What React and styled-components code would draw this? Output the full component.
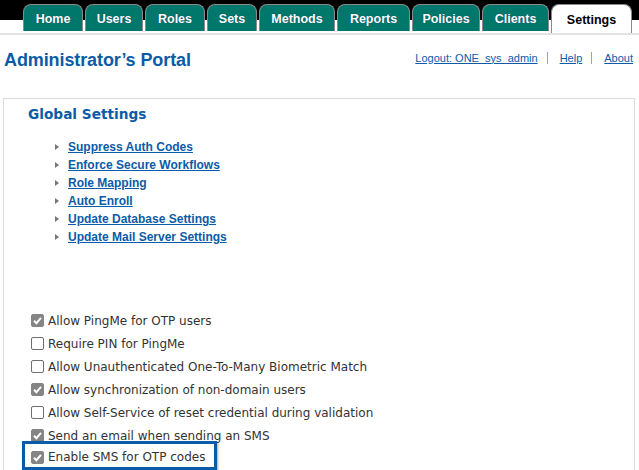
import React from "react";
import styled, { createGlobalStyle } from "styled-components";

const GlobalStyle = createGlobalStyle`
  body {
    margin: 0;
    background: #fff;
    font-family: "Liberation Sans", Arial, sans-serif;
  }
`;

const Page = styled.div`
  width: 639px;
  height: 470px;
  overflow: hidden;
`;

const TabBar = styled.div`
  display: flex;
  gap: 2px;
  height: 29px;
  padding: 4px 0 0 23px;
  background: linear-gradient(#000 0 20px, #fff 20px);
  border-bottom: 2px solid #e2e2e2;
`;

const Tab = styled.div`
  box-sizing: border-box;
  width: ${(p) => p.$w}px;
  height: ${(p) => (p.$active ? 29 : 27)}px;
  margin-bottom: ${(p) => (p.$active ? -2 : 0)}px;
  display: flex;
  align-items: center;
  justify-content: center;
  padding-top: 1px;
  border: 1px solid #8a8a8a;
  border-bottom: none;
  border-radius: 8px 8px 0 0;
  background: ${(p) => (p.$active ? "#fff" : "#00776b")};
  color: ${(p) => (p.$active ? "#000" : "#fff")};
  font-size: 12.5px;
  font-weight: bold;
  text-shadow: ${(p) => (p.$active ? "none" : "0 0 1px #003a60")};
  position: relative;
`;

const TitleRow = styled.div`
  display: flex;
  justify-content: space-between;
  align-items: center;
  padding: 14px 6px 0 4px;
  height: 22px;
`;

const Title = styled.h1`
  margin: 0;
  font-size: 18px;
  font-weight: bold;
  color: #0a5ca6;
  letter-spacing: -0.1px;
`;

const TopLinks = styled.div`
  display: flex;
  align-items: center;
  font-size: 11px;
  margin-top: -5px;
`;

const TopLink = styled.a`
  color: #0b5ba8;
  text-decoration: underline;
  padding: 0 ${(p) => (p.$last ? 0 : 9)}px 0 ${(p) => (p.$first ? 0 : 12)}px;
  border-right: ${(p) => (p.$last ? "none" : "1px solid #c89a6a")};
  line-height: 12px;
`;

const Panel = styled.div`
  margin: 27px 4px 0 3px;
  border: 1px solid #dcdcdc;
  border-bottom: none;
  height: 400px;
  padding: 6px 0 0 24px;
`;

const PanelTitle = styled.h2`
  margin: 0;
  font-family: "DejaVu Sans", Verdana, sans-serif;
  font-size: 13.7px;
  font-weight: bold;
  color: #0a5ca6;
  line-height: 18px;
`;

const LinkList = styled.ul`
  list-style: none;
  margin: 15px 0 0 0;
  padding: 0 0 0 27px;
`;

const LinkItem = styled.li`
  display: flex;
  align-items: center;
  height: 18px;
`;

const Arrow = styled.span`
  width: 0;
  height: 0;
  border-top: 3px solid transparent;
  border-bottom: 3px solid transparent;
  border-left: 4px solid #777;
  margin-right: 9px;
`;

const SettingLink = styled.a`
  color: #0b5ba8;
  font-size: 12px;
  font-weight: bold;
  text-decoration: underline;
`;

const Options = styled.div`
  margin-top: 63px;
  display: flex;
  flex-direction: column;
`;

const Option = styled.label`
  box-sizing: border-box;
  display: flex;
  align-items: center;
  gap: 4px;
  height: ${(p) => (p.$highlight ? 29 : 23)}px;
  width: ${(p) => (p.$highlight ? "195px" : "auto")};
  margin-left: ${(p) => (p.$highlight ? -6 : 3)}px;
  margin-top: ${(p) => (p.$highlight ? -6 : 0)}px;
  padding: ${(p) => (p.$highlight ? "3px 0 0 6px" : "0")};
  border: ${(p) => (p.$highlight ? "3px solid #0b5ca8" : "none")};
  box-shadow: ${(p) => (p.$highlight ? "1px 1px 2px rgba(0,0,0,0.35)" : "none")};
  font-family: "DejaVu Sans", Verdana, sans-serif;
  font-size: 12px;
  color: #333;
`;

const Box = styled.span`
  box-sizing: border-box;
  width: 13px;
  height: 13px;
  border-radius: 2px;
  border: 1px solid ${(p) => (p.$checked ? "#858585" : "#6f6f6f")};
  background: ${(p) => (p.$checked ? "#858585" : "#fff")};
  display: flex;
  align-items: center;
  justify-content: center;
  flex-shrink: 0;
`;

const tabs = [
  ["Home", 60],
  ["Users", 58],
  ["Roles", 60],
  ["Sets", 50],
  ["Methods", 76],
  ["Reports", 73],
  ["Policies", 68],
  ["Clients", 67],
  ["Settings", 81],
];

const links = [
  "Suppress Auth Codes",
  "Enforce Secure Workflows",
  "Role Mapping",
  "Auto Enroll",
  "Update Database Settings",
  "Update Mail Server Settings",
];

const options = [
  ["Allow PingMe for OTP users", true],
  ["Require PIN for PingMe", false],
  ["Allow Unauthenticated One-To-Many Biometric Match", false],
  ["Allow synchronization of non-domain users", true],
  ["Allow Self-Service of reset credential during validation", false],
  ["Send an email when sending an SMS", true],
  ["Enable SMS for OTP codes", true, true],
];

const Check = () => (
  <svg width="11" height="11" viewBox="0 0 11 11">
    <path d="M2 5.8 L4.4 8.2 L9 2.8" fill="none" stroke="#fff" strokeWidth="2" />
  </svg>
);

export default function App() {
  return (
    <Page>
      <GlobalStyle />
      <TabBar>
        {tabs.map(([name, w]) => (
          <Tab key={name} $w={w} $active={name === "Settings"}>
            {name}
          </Tab>
        ))}
      </TabBar>
      <TitleRow>
        <Title>Administrator’s Portal</Title>
        <TopLinks>
          <TopLink $first>Logout: ONE_sys_admin</TopLink>
          <TopLink>Help</TopLink>
          <TopLink $last>About</TopLink>
        </TopLinks>
      </TitleRow>
      <Panel>
        <PanelTitle>Global Settings</PanelTitle>
        <LinkList>
          {links.map((l) => (
            <LinkItem key={l}>
              <Arrow />
              <SettingLink>{l}</SettingLink>
            </LinkItem>
          ))}
        </LinkList>
        <Options>
          {options.map(([label, checked, hl]) => (
            <Option key={label} $highlight={hl}>
              <Box $checked={checked}>{checked && <Check />}</Box>
              {label}
            </Option>
          ))}
        </Options>
      </Panel>
    </Page>
  );
}
